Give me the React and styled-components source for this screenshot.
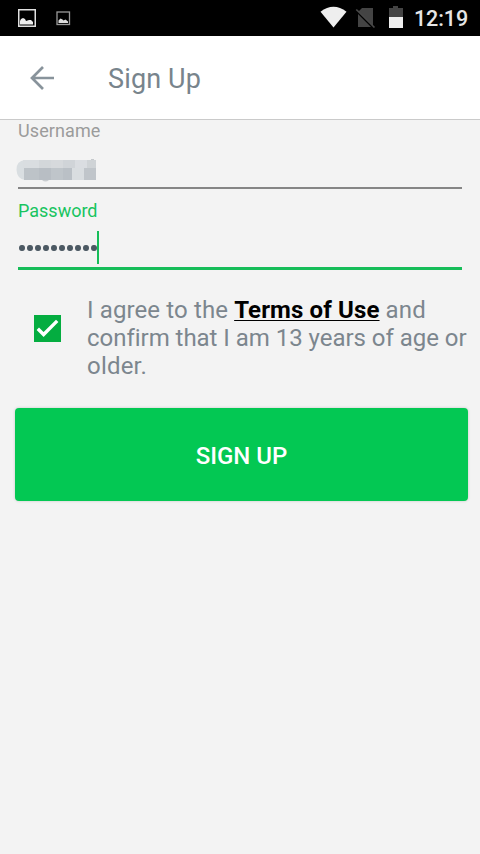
import React from "react";
import styled, { createGlobalStyle } from "styled-components";

const GlobalStyle = createGlobalStyle`
  * { box-sizing: border-box; }
  body {
    margin: 0;
    background: #f3f3f3;
    font-family: Roboto, "Noto Sans", sans-serif;
  }
`;

const Screen = styled.main`
  display: flex;
  flex-direction: column;
  width: 480px;
  height: 854px;
  overflow: hidden;
  background: #f3f3f3;
`;

const StatusBar = styled.div`
  display: flex;
  justify-content: space-between;
  height: 36px;
  flex: none;
  background: #000;
`;

const StatusGroup = styled.div`
  display: flex;
  align-items: center;
`;

const StatusIcon = styled.svg`
  display: block;
  flex: none;
  height: 36px;
`;

const Clock = styled.span`
  width: 66px;
  padding-top: 1px;
  color: #e6e6e6;
  font-size: 21.5px;
  font-weight: 500;
  line-height: 35px;
  letter-spacing: -0.1px;
  white-space: nowrap;
`;

const AppBar = styled.header`
  display: flex;
  align-items: center;
  height: 84px;
  flex: none;
  padding-left: 29px;
  background: #fff;
  border-bottom: 1px solid #cacaca;
`;

const BackButton = styled.button`
  display: flex;
  width: 79px;
  padding: 1px 0 0;
  border: 0;
  background: none;
`;

const Title = styled.h1`
  margin: 2px 0 0;
  color: #78848c;
  font-size: 27px;
  font-weight: 400;
  line-height: 34px;
  letter-spacing: 0.15px;
`;

const Form = styled.form`
  display: flex;
  flex-direction: column;
`;

const Field = styled.div`
  display: flex;
  flex-direction: column;
  height: ${(p) => (p.$active ? "70px" : "69px")};
  margin: ${(p) => (p.$active ? "11px" : "0")} 18px 0;
  border-bottom: ${(p) => (p.$active ? "3px solid #16bd59" : "2px solid #858585")};
`;

const Label = styled.label`
  height: 22px;
  color: ${(p) => (p.$active ? "#18c45f" : "#9b9b9b")};
  font-size: 18px;
  line-height: 22px;
  letter-spacing: ${(p) => (p.$active ? "0" : "0.1px")};
`;

const Redacted = styled.svg`
  display: block;
  width: 84px;
  height: 27px;
  margin: 15px 0 0 -3px;
`;

const PasswordValue = styled.div`
  display: flex;
  align-items: center;
  height: 33px;
  margin-top: 9px;
  padding-left: 1.3px;
`;

const Dots = styled.div`
  display: flex;
  gap: 2.6px;
  padding-top: 1px;
`;

const Dot = styled.span`
  width: 5.4px;
  height: 6px;
  border-radius: 50%;
  background: #4c5963;
`;

const Caret = styled.span`
  width: 2px;
  height: 33px;
  margin-left: 0.3px;
  background: #16bd59;
`;

const Consent = styled.div`
  display: flex;
  margin: 26px 0 0 34px;
`;

const Checkbox = styled.span`
  display: block;
  width: 27px;
  height: 27px;
  flex: none;
  margin: 19px 26px 0 0;
  background: #04ad40;
  svg { display: block; }
`;

const ConsentText = styled.p`
  margin: 0;
  color: #7c868e;
  font-size: 24px;
  line-height: 28px;
  white-space: nowrap;
`;

const ConsentLine = styled.span`
  display: block;
  letter-spacing: ${(p) => p.$tracking};
`;

const TermsLink = styled.a`
  color: #000;
  font-weight: 700;
  letter-spacing: 0.13px;
  text-decoration: underline;
  text-decoration-thickness: 1px;
  text-underline-offset: 2px;
  text-decoration-skip-ink: none;
`;

const Submit = styled.button`
  width: 453px;
  height: 93px;
  margin: 28px 0 0 15px;
  padding: 3px 0 0;
  border: 0;
  border-radius: 4px;
  background: #03c853;
  box-shadow: 0 0 3px rgba(0, 0, 0, 0.18);
  color: #fff;
  font-family: inherit;
  font-size: 24px;
  font-weight: 500;
`;

const mosaic = [
  [8, 3, 16, 8, "#d9dde0"], [24, 3, 12, 8, "#d3d7da"],
  [36, 3, 12, 8, "#d6d9dc"], [48, 3, 12, 8, "#d0d4d8"],
  [60, 3, 12, 8, "#dadde1"], [72, 3, 9, 8, "#cfd3d6"],
  [9, 11, 15, 12, "#bdc3c8"], [24, 11, 12, 12, "#b8bec4"],
  [36, 11, 12, 12, "#bfc5ca"], [48, 11, 9, 12, "#bac0c6"],
  [57, 11, 12, 12, "#d9dde0"], [69, 11, 12, 12, "#c0c5ca"],
];

export default function App() {
  return (
    <Screen>
      <GlobalStyle />
      <StatusBar>
        <StatusGroup>
          <StatusIcon width="80" viewBox="0 0 80 36" fill="none">
            <rect x="18.75" y="9.75" width="16.5" height="16.5" stroke="#e0e0e0" strokeWidth="1.5" />
            <path d="M20 24.5v-3.5l1-2 2-1 2 1 1 2 3-1 2 0 2 2v2.5z" fill="#eee" />
            <rect x="57" y="12" width="12.5" height="12.5" stroke="#999" strokeWidth="1.3" />
            <path d="M58.5 23v-2.5l2-2 2 1 1 1 2-1 2.5 2V23z" fill="#ddd" />
          </StatusIcon>
        </StatusGroup>
        <StatusGroup>
          <StatusIcon width="94" viewBox="320 0 94 36">
            <path d="M320.5 11.7Q333.5 2 346.5 11.7L333.5 27.5Z" fill="#eee" />
            <path d="M362 8h11v18L358.5 11.5z" fill="#444" />
            <path d="M358 14l13 13H358z" fill="#444" />
            <path d="M356.3 9.5L374.5 27.5" stroke="#484848" strokeWidth="1.7" />
            <path d="M389 8h4V6h5v2h5v9h-14z" fill="#444" />
            <path d="M389 17h14v11h-14z" fill="#eee" />
          </StatusIcon>
          <Clock>12:19</Clock>
        </StatusGroup>
      </StatusBar>
      <AppBar>
        <BackButton type="button" aria-label="Back">
          <svg width="27" height="26" viewBox="0 0 27 26" fill="none" stroke="#88939b" strokeWidth="2.7">
            <path d="M25 13H3M14 2L3 13l11 11" />
          </svg>
        </BackButton>
        <Title>Sign Up</Title>
      </AppBar>
      <Form>
        <Field>
          <Label>Username</Label>
          <Redacted viewBox="0 0 84 27" aria-hidden="true">
            <path d="M10 3Q1 4 1.5 13Q2 22 10 23z" fill="#d9dee1" />
            {mosaic.map(([x, y, w, h, fill]) => (
              <rect key={`${x}-${y}`} x={x} y={y} width={w} height={h} fill={fill} />
            ))}
            <path d="M27 23q3.5 3 7 0" fill="#c9cdd0" />
            <path d="M76 2.5h3" stroke="#c5c9cc" />
          </Redacted>
        </Field>
        <Field $active>
          <Label $active>Password</Label>
          <PasswordValue>
            <Dots>
              {Array.from({ length: 10 }, (_, i) => <Dot key={i} />)}
            </Dots>
            <Caret />
          </PasswordValue>
        </Field>
        <Consent>
          <Checkbox role="checkbox" aria-checked="true">
            <svg width="27" height="27" viewBox="0 0 27 27" fill="none" stroke="#fff" strokeWidth="3.4">
              <path d="M3.8 13.7L9.6 19.5L23.2 5.9" />
            </svg>
          </Checkbox>
          <ConsentText>
            <ConsentLine $tracking="0.12px">
              I agree to the <TermsLink>Terms of Use</TermsLink> and
            </ConsentLine>
            <ConsentLine $tracking="-0.03px">confirm that I am 13 years of age or</ConsentLine>
            <ConsentLine $tracking="0.2px">older.</ConsentLine>
          </ConsentText>
        </Consent>
        <Submit type="button">SIGN UP</Submit>
      </Form>
    </Screen>
  );
}
